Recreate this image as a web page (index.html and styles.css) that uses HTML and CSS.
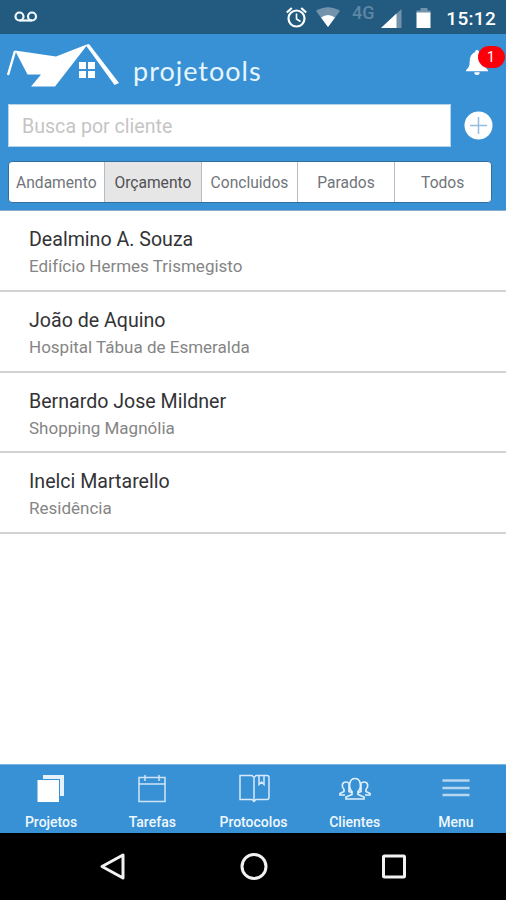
FILE: index.html
```html
<!DOCTYPE html>
<html lang="pt-BR">
<head>
<meta charset="utf-8">
<title>Projetools</title>
<link rel="stylesheet" href="styles.css">
</head>
<body>
<div class="screen">
  <div class="status">
    <svg class="voicemail" width="24" height="12" viewBox="0 0 24 12"><g fill="none" stroke="#f4fbff" stroke-width="2.200"><circle cx="5.500" cy="5.500" r="4"/><circle cx="18" cy="5.500" r="4"/><path d="M5.500 9.500H18"/></g></svg>
    <svg class="status-icons" width="150" height="34" viewBox="0 0 150 34">
      <g fill="none" stroke="#fff" stroke-width="2.200"><circle cx="11.500" cy="18.500" r="8"/><path d="M11.500 13.500V19l4 2.500" stroke-width="1.600"/><path d="M1.800 12.500l5-4.500M21.200 12.500l-5-4.500"/></g>
      <path d="M31 11Q43 3.500 55 11L43 27Z" fill="#7293ab"/><path d="M36 17.500Q43 12.500 50 17.500L43 27Z" fill="#fff"/>
      <path d="M116.500 9V28H96Z" fill="#7293ab"/><path d="M111.500 13.500V28H96Z" fill="#fff"/>
      <path d="M135.500 8h7v2.500h3V14h-14v-3.500h4z" fill="#7293ab"/><path d="M131.500 12.500h14V28h-14z" fill="#fff"/>
    </svg>
    <span class="network">4G</span>
    <span class="clock">15:12</span>
  </div>
  <header class="header">
    <div class="brand-row">
      <svg class="logo" width="113" height="46" viewBox="0 0 113 46"><path d="M8 7.500L49 13.500 81 1 48 43.500H24L34 31.500H20.500Z" fill="#fff"/><path d="M1 32L8 8" stroke="#fff" stroke-width="2.400"/><path d="M79 2.500L82 1 112 40l-4.500 2Z" fill="#fff"/><path d="M72 19h7v7h-7zM81 19h7v7h-7zM72 28h7v7h-7zM81 28h7v7h-7z" fill="#fff"/></svg>
      <span class="wordmark">projetools</span>
      <div class="alerts">
        <svg width="22" height="27" viewBox="0 0 24 28" preserveAspectRatio="none"><path d="M12 1c1.500 0 2 1 2 2 5 1.500 6 5 6 10 0 4 1 6.500 4 9v1H0v-1c3-2.500 4-5 4-9 0-5 2-8.500 6-10 0-1 .500-2 2-2zM9 24h6c0 4-6 4-6 0z" fill="#fff"/></svg>
        <span class="badge">1</span>
      </div>
    </div>
    <div class="search-row">
      <div class="search"><span>Busca por cliente</span></div>
      <svg width="29" height="29" viewBox="0 0 29 29"><circle cx="14.500" cy="14.500" r="14" fill="#fff"/><path d="M6 14.500h17M14.500 6v17" stroke="#92bce0" stroke-width="1.500"/></svg>
    </div>
    <div class="segments">
      <div class="segment"><span>Andamento</span></div>
      <div class="segment active"><span>Orçamento</span></div>
      <div class="segment"><span>Concluidos</span></div>
      <div class="segment"><span>Parados</span></div>
      <div class="segment"><span>Todos</span></div>
    </div>
  </header>
  <main class="list">
    <div class="item"><div class="name">Dealmino A. Souza</div><div class="place">Edifício Hermes Trismegisto</div></div>
    <div class="item"><div class="name">João de Aquino</div><div class="place">Hospital Tábua de Esmeralda</div></div>
    <div class="item"><div class="name">Bernardo Jose Mildner</div><div class="place">Shopping Magnólia</div></div>
    <div class="item"><div class="name">Inelci Martarello</div><div class="place">Residência</div></div>
  </main>
  <nav class="tabs">
    <div class="tab"><svg width="32" height="30" viewBox="0 0 32 30"><path d="M8 1h21v21h-4V5H8z" fill="#e5f2fd"/><path d="M2.500 6H24v22H2.500z" fill="#fff"/></svg><span>Projetos</span></div>
    <div class="tab"><svg width="32" height="30" viewBox="0 0 32 30"><g fill="none" stroke="#cfe4f8" stroke-width="1.500"><path d="M3 3.500h26v24H3zM3 10h26M9 1v6M23 1v6"/></g></svg><span>Tarefas</span></div>
    <div class="tab"><svg width="32" height="30" viewBox="0 0 32 30"><g fill="none" stroke="#d7e9fa" stroke-width="1.500"><path d="M16 3.500L14 1.500H2v24h12l2 2 2-2h11q2 0 2-2v-20q0-2-2-2H18L16 3.500V27M21 1.500v9l2.500-2.500 2.500 2.500v-9"/></g></svg><span>Protocolos</span></div>
    <div class="tab"><svg width="32" height="30" viewBox="0 0 32 30"><g fill="none" stroke="#e0effc" stroke-width="1.700"><path d="M7 25h18v-2l-6-2.500v-3c4-4 3-13-3-13s-7 9-3 13v3L7 23zM6 21H1v-1.500l4-2v-2C2 12 3 8 7 8q2 0 3 1.500M26 21h5v-1.500l-4-2v-2c3-3.500 2-7.500-2-7.500q-2 0-3 1.500M10 10v5.500v2l2 1M22 10v5.500v2l-2 1"/></g></svg><span>Clientes</span></div>
    <div class="tab"><svg width="32" height="30" viewBox="0 0 32 30"><path d="M2.500 6.500h27M2.500 14h27M2.500 21h27" stroke="#b6d5f1" stroke-width="2.500"/></svg><span>Menu</span></div>
  </nav>
  <div class="system-nav">
    <svg width="28" height="30" viewBox="0 0 28 30"><path d="M24 3v23L3 14.500Z" fill="none" stroke="#f2f2f2" stroke-width="3" stroke-linejoin="round"/></svg>
    <svg width="28" height="30" viewBox="0 0 28 30"><circle cx="14" cy="14.500" r="12" fill="none" stroke="#f2f2f2" stroke-width="3"/></svg>
    <svg width="28" height="30" viewBox="0 0 28 30"><rect x="3.500" y="4" width="21" height="21" rx="1" fill="none" stroke="#f2f2f2" stroke-width="3"/></svg>
  </div>
</div>
</body>
</html>
```
FILE: styles.css
```css
* { box-sizing: border-box; }
body { margin: 0; font-family: Roboto, "Liberation Sans", sans-serif; }
svg { display: block; flex: none; }
.screen { width: 506px; height: 900px; display: flex; flex-direction: column; background: #fff; overflow: hidden; }
.status { height: 34px; background: #225a80; display: flex; align-items: center; padding: 0 10px 0 14px; position: relative; color: #fff; }
.status-icons { margin-left: 247px; }
.network { position: absolute; left: 352px; top: 3px; font-size: 18px; line-height: 20px; font-weight: 500; color: #5d86a4; }
.clock { margin-left: auto; font-size: 19px; font-weight: 500; letter-spacing: 0.3px; padding-top: 2px; }
.header { height: 177px; background: #3891d5; border-bottom: 1px solid #86abce; padding: 0 15px 0 7px; }
.brand-row { height: 70px; display: flex; align-items: flex-start; padding-top: 9px; }
.wordmark { font-family: Lato, sans-serif; font-size: 27px; line-height: 32px; color: #e6f5ff; margin: 12px 0 0 13px; letter-spacing: 1px; }
.alerts { margin: 6px 3.5px 0 auto; position: relative; }
.badge { position: absolute; left: 12px; top: -3px; width: 27px; height: 22px; border-radius: 11px; background: #fb0008; color: #fff; font-size: 14px; line-height: 22px; text-align: center; }
.search-row { display: flex; align-items: center; justify-content: space-between; margin-right: -2px; height: 43px; margin-left: 1px; }
.search { width: 443px; height: 43px; border: 1px solid #b5d5ed; background: #fff; padding-left: 13px; font-size: 19.6px; line-height: 43px; color: #c5c5c5; }
.segments { display: flex; width: 484px; height: 42px; margin: 14px 0 0 0.5px; background: #fff; border: 1px solid #326f9f; border-radius: 4px; overflow: hidden; }
.segment { flex: 1; text-align: center; font-size: 15.6px; line-height: 42px; color: #70757a; border-left: 1px solid #b4bdc7; }
.segment:first-child { border-left: 0; }
.segment.active { background: #e6e6e7; color: #505052; }
.list { flex: 1; }
.item { height: 80.750px; border-bottom: 2px solid #d2d2d2; padding: 17px 0 0 29px; }
.name { font-size: 19.6px; line-height: 24px; color: #333336; }
.place { font-size: 17px; line-height: 20px; margin-top: 4px; color: #858585; }
.tabs { height: 69px; background: #3891d5; display: flex; border-top: 1px solid #79b4e2; }
.tab { flex: 1; display: flex; flex-direction: column; align-items: center; padding: 9px 0 0 1px; color: #eff8ff; font-size: 14px; line-height: 18px; font-weight: 500; }
.tab span { margin-top: 9px; }
.system-nav { height: 67px; background: #000; display: flex; justify-content: center; align-items: center; gap: 112.500px; padding-left: 1px; }
```
